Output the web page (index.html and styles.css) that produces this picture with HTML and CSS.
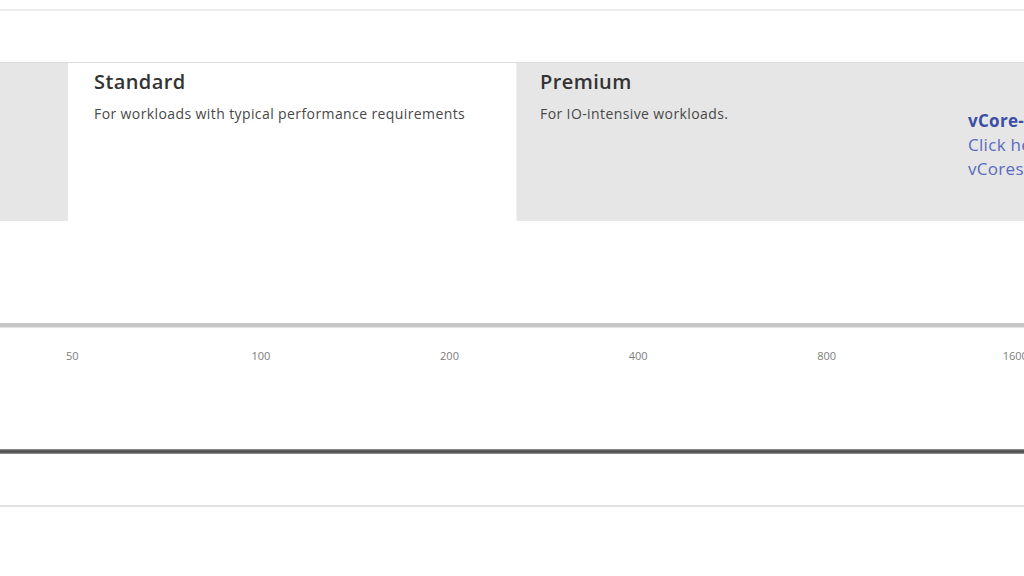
FILE: index.html
```html
<!DOCTYPE html>
<html lang="en">
<head>
<meta charset="utf-8">
<title>Service tiers</title>
<link rel="stylesheet" href="styles.css">
</head>
<body>
<div class="page">
  <div class="top-rule"></div>
  <section class="tiers">
    <div class="tier tier-basic"></div>
    <div class="tier tier-standard">
      <h2 class="tier-title">Standard</h2>
      <p class="tier-desc">For workloads with typical performance requirements</p>
    </div>
    <div class="tier tier-premium">
      <div class="premium-text">
        <h2 class="tier-title">Premium</h2>
        <p class="tier-desc">For IO-intensive workloads.</p>
      </div>
      <div class="vcore-info">
        <div class="vcore-title">vCore-based purchasing model</div>
        <div class="vcore-link">Click here to learn more</div>
        <div class="vcore-link">vCores and storage</div>
      </div>
    </div>
  </section>
  <div class="slider">
    <div class="slider-track"></div>
    <div class="ticks">
      <span class="tick">50</span>
      <span class="tick">100</span>
      <span class="tick">200</span>
      <span class="tick">400</span>
      <span class="tick">800</span>
      <span class="tick">1600</span>
    </div>
  </div>
  <div class="dark-rule"></div>
  <div class="light-rule"></div>
</div>
</body>
</html>
```

FILE: styles.css
```css
html, body {
  margin: 0;
  padding: 0;
  background: #ffffff;
}
body {
  width: 1024px;
  height: 576px;
  overflow: hidden;
  font-family: "Open Sans", "Noto Sans", sans-serif;
  color: #333333;
}
.page {
  display: flex;
  flex-direction: column;
}
.top-rule {
  margin-top: 9px;
  height: 2px;
  background: #ececec;
}
.tiers {
  margin-top: 51px;
  height: 158px;
  border-top: 1px solid #dcdcdc;
  display: grid;
  grid-template-columns: 68px 448px 1fr;
}
.tier {
  background: #e6e6e6;
}
.tier-standard {
  background: #ffffff;
  padding: 5px 0 0 26px;
}
.tier-premium {
  display: flex;
  padding: 5px 0 0 24px;
  box-shadow: inset 1px 0 1px #f0f0f0;
}
.premium-text {
  width: 428px;
  flex: none;
}
.tier-title {
  margin: 0;
  font-size: 20px;
  font-weight: 600;
  line-height: 28px;
  color: #333333;
  letter-spacing: 0.4px;
}
.tier-desc {
  margin: 9px 0 0;
  font-size: 14px;
  line-height: 18px;
  color: #484848;
  letter-spacing: 0.4px;
}
.vcore-info {
  margin-top: 41px;
  white-space: nowrap;
  font-size: 17px;
  line-height: 24px;
  letter-spacing: 0.3px;
}
.vcore-title {
  font-weight: 700;
  color: #3a4ea6;
}
.vcore-link {
  color: #5a6bc0;
}
.slider {
  margin-top: 102px;
}
.slider-track {
  height: 4px;
  background: #c6c6c6;
  box-shadow: 0 1px 1px #e2e2e2;
}
.ticks {
  margin: 22px 0 0 -22px;
  display: grid;
  grid-template-columns: repeat(6, 188.6px);
  font-size: 11px;
  line-height: 14px;
  color: #7c7c7c;
}
.tick {
  text-align: center;
}
.dark-rule {
  margin-top: 86px;
  height: 5px;
  background: linear-gradient(#9a9a9a, #4e4e4e 40%, #4e4e4e 60%, #9a9a9a);
}
.light-rule {
  margin-top: 51px;
  height: 2px;
  background: #e2e2e2;
}
```
